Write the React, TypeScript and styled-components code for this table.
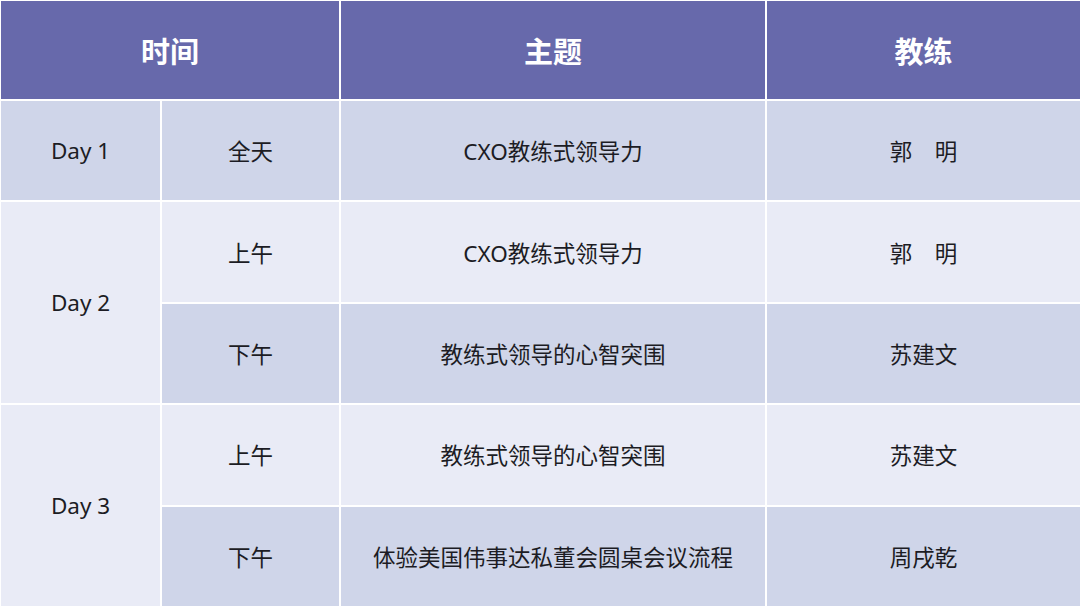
import React from 'react';
import { styled, createGlobalStyle } from 'styled-components';

const GlobalStyle = createGlobalStyle`
  html, body {
    margin: 0;
    padding: 0;
    background: #ffffff;
  }
  body {
    font-family: "Noto Sans", "Noto Sans CJK SC", sans-serif;
  }
`;

type Row = { slot: string; topic: string; coach: string };
type Day = { day: string; rows: Row[] };

const schedule: Day[] = [
  { day: 'Day 1', rows: [{ slot: '全天', topic: 'CXO教练式领导力', coach: '郭　明' }] },
  {
    day: 'Day 2',
    rows: [
      { slot: '上午', topic: 'CXO教练式领导力', coach: '郭　明' },
      { slot: '下午', topic: '教练式领导的心智突围', coach: '苏建文' },
    ],
  },
  {
    day: 'Day 3',
    rows: [
      { slot: '上午', topic: '教练式领导的心智突围', coach: '苏建文' },
      { slot: '下午', topic: '体验美国伟事达私董会圆桌会议流程', coach: '周戌乾' },
    ],
  },
];

const App: React.FC = () => {
  let rowIndex = 0;
  return (
    <>
      <GlobalStyle />
      <Table>
        <HeadCell $span={2}>时间</HeadCell>
        <HeadCell>主题</HeadCell>
        <HeadCell>教练</HeadCell>
        {schedule.map((d) => {
          const start = rowIndex;
          const cells = d.rows.map((r, i) => {
            const dark = (start + i) % 2 === 0;
            return (
              <React.Fragment key={d.day + i}>
                <Cell $dark={dark}>{r.slot}</Cell>
                <Cell $dark={dark}>{r.topic}</Cell>
                <Cell $dark={dark}>{r.coach}</Cell>
              </React.Fragment>
            );
          });
          rowIndex += d.rows.length;
          return (
            <React.Fragment key={d.day}>
              <DayCell $dark={d.rows.length === 1} $rows={d.rows.length}>
                {d.day}
              </DayCell>
              {cells}
            </React.Fragment>
          );
        })}
      </Table>
    </>
  );
};

export default App;

const Table = styled.div`
  width: 1080px;
  height: 608px;
  box-sizing: border-box;
  padding: 1px 0 2px 1px;
  display: grid;
  grid-template-columns: 159px 177px 424px 1fr;
  grid-template-rows: 98px repeat(5, 1fr);
  gap: 2px;
  background: #ffffff;
`;

const HeadCell = styled.div<{ $span?: number }>`
  grid-column: span ${(p) => p.$span ?? 1};
  background: #6769ab;
  color: #ffffff;
  font-family: "Noto Sans CJK SC", sans-serif;
  font-weight: 700;
  font-size: 29px;
  display: flex;
  align-items: center;
  justify-content: center;
`;

const Cell = styled.div<{ $dark: boolean }>`
  background: ${(p) => (p.$dark ? '#cfd5e9' : '#e9ebf6')};
  color: #1c1c24;
  font-family: "Noto Sans", "Noto Sans CJK SC", sans-serif;
  font-size: 22.5px;
  display: flex;
  align-items: center;
  justify-content: center;
`;

const DayCell = styled(Cell)<{ $rows: number }>`
  grid-row: span ${(p) => p.$rows};
`;
